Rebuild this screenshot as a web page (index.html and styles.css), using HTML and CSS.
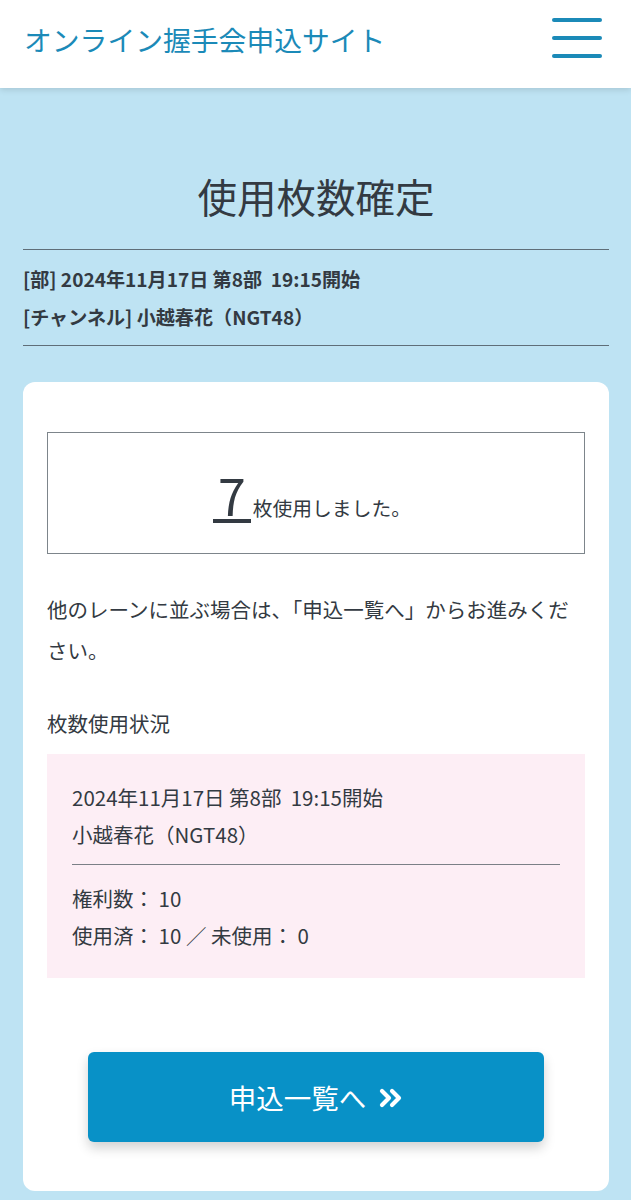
FILE: index.html
```html
<!DOCTYPE html>
<html lang="ja">
<head>
  <meta charset="UTF-8" />
  <title>使用枚数確定 | オンライン握手会申込サイト</title>
  <link rel="stylesheet" href="styles.css">
</head>
<body>

<!-- ========== Cabecera ========== -->
<header class="cabecera">
  <div class="logo">オンライン握手会申込サイト</div>
  <button class="menu-btn" aria-label="メニュー">
    <span></span><span></span><span></span>
  </button>
</header>

<main class="contenido">
  <h1 class="titulo">使用枚数確定</h1>

  <div class="info">
    <p>[部] 2024年11月17日 第8部&nbsp; 19:15開始</p>
    <p>[チャンネル] 小越春花（NGT48）</p>
  </div>

  <!-- ========== Tarjeta ========== -->
  <section class="tarjeta">
    <div class="resultado">
      <span class="numero">7</span><span class="resultado-txt">枚使用しました。</span>
    </div>

    <p class="aviso">他のレーンに並ぶ場合は、「申込一覧へ」からお進みください。</p>

    <h2 class="sub">枚数使用状況</h2>
    <div class="estado">
      <p>2024年11月17日 第8部&nbsp; 19:15開始</p>
      <p>小越春花（NGT48）</p>
      <hr>
      <p>権利数： 10</p>
      <p>使用済： 10 ／ 未使用： 0</p>
    </div>

    <div class="acciones">
      <a class="btn-lista" href="#">申込一覧へ
        <svg class="icono" viewBox="0 0 24 20" width="24" height="20" aria-hidden="true">
          <polyline points="3,3 10,10 3,17" />
          <polyline points="13,3 20,10 13,17" />
        </svg>
      </a>
    </div>
  </section>
</main>

</body>
</html>
```

FILE: styles.css
```css
:root{
  --azul:#1b8ab8; --azul-btn:#0891c7; --fondo:#bee3f3;
  --texto:#333a42; --linea:#5f6e78; --rosa:#fdeef5;
}
*{box-sizing:border-box}
body{
  margin:0;background:var(--fondo);color:var(--texto);
  font-family:"Noto Sans CJK JP","Noto Sans",sans-serif;
}
p,h1,h2{margin:0}

/* ---------- Cabecera ---------- */
.cabecera{
  height:88px;background:#fff;display:flex;align-items:center;justify-content:space-between;
  padding:0 29px 0 24px;box-shadow:0 2px 6px rgba(0,0,0,.12);position:relative;
}
.logo{font-size:27.8px;color:var(--azul);margin-top:-10px}
.menu-btn{
  width:50px;height:40px;padding:0;border:none;background:none;cursor:pointer;
  display:flex;flex-direction:column;justify-content:space-between;margin-top:-12px;
}
.menu-btn span{display:block;height:4px;border-radius:2px;background:var(--azul)}

/* ---------- Contenido ---------- */
.contenido{padding:79px 22px 10px 23px}
.titulo{font-size:39.5px;font-weight:400;text-align:center;line-height:58px}
.info{
  margin-top:24px;border-top:1px solid var(--linea);border-bottom:1px solid var(--linea);
  padding:10px 0 9px;font-weight:700;font-size:19.1px;line-height:38px;
}

/* ---------- Tarjeta ---------- */
.tarjeta{
  margin-top:36px;background:#fff;border-radius:12px;padding:50px 24px 49px;
}
.resultado{
  height:122px;border:1px solid #7d858b;display:flex;align-items:baseline;justify-content:center;
  padding-top:36px;padding-right:8px;
}
.numero{
  font-size:50px;line-height:1;padding:0 5px;border-bottom:4px solid var(--texto);
  font-weight:400;margin-right:2px;
}
.resultado-txt{font-size:19.8px}
.aviso{margin-top:35px;font-size:20.5px;line-height:41px}
.sub{margin-top:31px;font-size:20.5px;font-weight:400;line-height:42px}
.estado{
  margin-top:10px;background:var(--rosa);padding:25px 25px 24px;
  font-size:20.5px;line-height:37px;
}
.estado hr{margin:11px 0 15px;border:none;border-top:1px solid #7b7f86}

.acciones{margin-top:74px;display:flex;justify-content:center}
.btn-lista{
  width:456px;height:90px;background:var(--azul-btn);color:#fff;text-decoration:none;
  border-radius:6px;display:flex;align-items:center;justify-content:center;gap:13px;
  font-size:27.5px;box-shadow:0 6px 12px rgba(0,0,0,.18);
}
.icono{fill:none;stroke:#fff;stroke-width:4.2;stroke-linecap:round;stroke-linejoin:round;margin-top:2px}
```
